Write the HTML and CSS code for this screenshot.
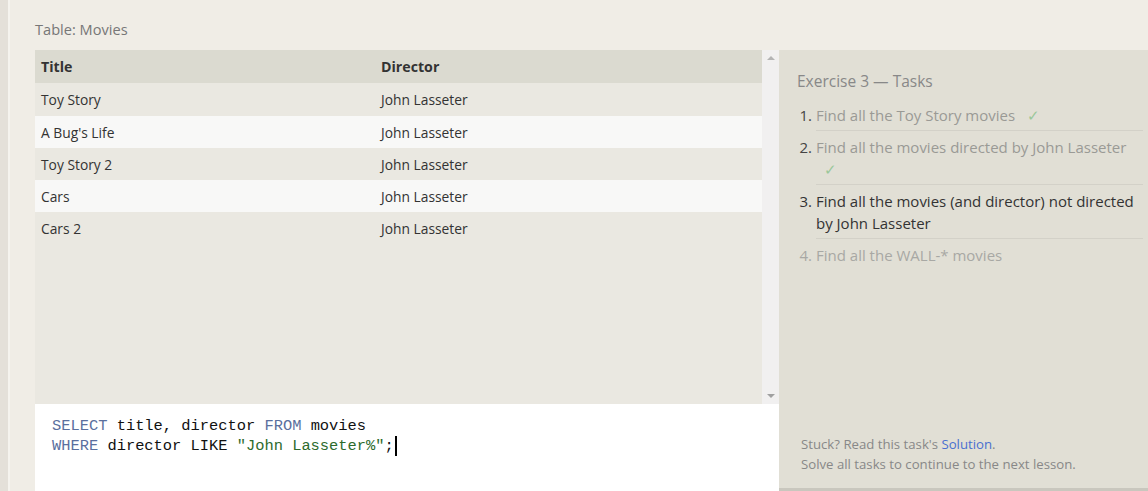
FILE: index.html
```html
<!DOCTYPE html>
<html>
<head>
<meta charset="utf-8">
<link rel="stylesheet" href="styles.css">
</head>
<body>
<div class="page">
  <div class="edge"></div>
  <main class="main">
    <div class="caption">Table: Movies</div>
    <div class="workspace">
      <div class="left">
        <div class="table-area">
          <div class="table-scroll">
            <table class="grid">
              <thead>
                <tr><th class="c1">Title</th><th>Director</th></tr>
              </thead>
              <tbody>
                <tr class="odd first"><td>Toy Story</td><td>John Lasseter</td></tr>
                <tr class="even"><td>A Bug's Life</td><td>John Lasseter</td></tr>
                <tr class="odd"><td>Toy Story 2</td><td>John Lasseter</td></tr>
                <tr class="even"><td>Cars</td><td>John Lasseter</td></tr>
                <tr class="odd"><td>Cars 2</td><td>John Lasseter</td></tr>
              </tbody>
            </table>
          </div>
          <div class="scrollbar">
            <span class="arrow up"></span>
            <span class="arrow down"></span>
          </div>
        </div>
        <div class="editor">
          <div class="code"><span class="kw">SELECT</span> title, director <span class="kw">FROM</span> movies</div>
          <div class="code"><span class="kw">WHERE</span> director LIKE <span class="str">"John Lasseter%"</span>;<span class="cursor"></span></div>
        </div>
      </div>
      <aside class="tasks">
        <h2 class="tasks-title">Exercise 3 — Tasks</h2>
        <ol class="task-list">
          <li class="task done"><span class="num">1.</span><span class="body">Find all the Toy Story movies <span class="check">✓</span></span></li>
          <li class="task done"><span class="num">2.</span><span class="body">Find all the movies directed by John Lasseter <span class="check">✓</span></span></li>
          <li class="task active"><span class="num">3.</span><span class="body">Find all the movies (and director) not directed by John Lasseter</span></li>
          <li class="task pending"><span class="num">4.</span><span class="body noline">Find all the WALL-* movies</span></li>
        </ol>
        <div class="tasks-foot">
          <div>Stuck? Read this task's <a class="link">Solution</a>.</div>
          <div>Solve all tasks to continue to the next lesson.</div>
        </div>
      </aside>
    </div>
  </main>
</div>
</body>
</html>
```

FILE: styles.css
```css
html, body {
  margin: 0;
  padding: 0;
  height: 100%;
  overflow: hidden;
}
body {
  background: #f0ede6;
  font-family: "Open Sans", "Noto Sans", sans-serif;
  color: #333;
}
.page {
  display: flex;
  height: 100%;
}
.edge {
  width: 8px;
  flex: none;
  background: #e4e0d9;
  border-right: 2px solid #f5f3ee;
}
.main {
  flex: 1;
  padding-left: 25px;
  display: flex;
  flex-direction: column;
}
.caption {
  flex: none;
  height: 50px;
  box-sizing: border-box;
  padding-top: 20px;
  font-size: 14.6px;
  color: #777;
  line-height: 18px;
}
.workspace {
  flex: none;
  display: flex;
  align-items: flex-start;
}
.left {
  width: 744px;
  flex: none;
  display: flex;
  flex-direction: column;
}
.table-area {
  flex: none;
  height: 354px;
  display: flex;
  background: #eae8e1;
}
.table-scroll {
  flex: 1;
}
.grid {
  width: 100%;
  border-collapse: collapse;
  font-size: 13.8px;
}
.grid th {
  background: #dbdad0;
  text-align: left;
  font-weight: bold;
  font-size: 14.2px;
  height: 33px;
  padding: 0 6px;
  color: #333;
}
.grid th.c1 {
  width: 328px;
}
.grid td {
  height: 32px;
  padding: 0 6px;
  color: #333;
}
.grid tr.first td {
  height: 33px;
}
.grid tr.odd td {
  background: #eae8e1;
}
.grid tr.even td {
  background: #f8f8f7;
}
.scrollbar {
  width: 17px;
  flex: none;
  background: #f1f0f0;
  display: flex;
  flex-direction: column;
  justify-content: space-between;
  align-items: center;
  padding: 6px 0 6px;
  box-sizing: border-box;
}
.arrow {
  width: 0;
  height: 0;
  border-left: 4px solid transparent;
  border-right: 4px solid transparent;
}
.arrow.up {
  border-bottom: 4px solid #b4b4b4;
}
.arrow.down {
  border-top: 4px solid #a0a0a0;
}
.editor {
  flex: none;
  background: #fff;
  height: 87px;
  box-sizing: border-box;
  padding: 12px 17px 0;
}
.code {
  font-family: "Liberation Mono", "DejaVu Sans Mono", monospace;
  font-size: 15.4px;
  line-height: 20px;
  color: #111;
  white-space: pre;
  display: flex;
  align-items: center;
}
.kw {
  color: #5a6f9e;
}
.str {
  color: #2d6b2d;
}
.cursor {
  display: inline-block;
  width: 2px;
  height: 20px;
  background: #000;
  margin-left: 1px;
}
.tasks {
  width: 369px;
  flex: none;
  height: 441px;
  box-sizing: border-box;
  background: #e1dfd5;
  border-bottom: 3px solid #c9c7be;
  padding: 20px 5px 14px 18px;
  display: flex;
  flex-direction: column;
}
.tasks-title {
  margin: 0 0 7px;
  font-weight: normal;
  font-size: 15.5px;
  line-height: 22px;
  color: #888;
}
.task-list {
  list-style: none;
  margin: 0;
  padding: 0;
  font-size: 15px;
  line-height: 22px;
}
.task {
  display: flex;
}
.num {
  width: 15px;
  flex: none;
  text-align: right;
  margin-right: 4px;
  padding-top: 5px;
}
.body {
  flex: 1;
  padding: 5px 0 4px;
  border-bottom: 1px solid #d3d1c8;
}
.body.noline {
  border-bottom: none;
}
.task.done .num {
  color: #444;
}
.task.done .body {
  color: #9a9a95;
}
.task.active .num,
.task.active .body {
  color: #333;
}
.task.pending .num,
.task.pending .body {
  color: #a8a8a4;
}
.check {
  color: #9ac79a;
  margin-left: 8px;
}
.tasks-foot {
  margin-top: auto;
  padding-left: 4px;
  font-size: 13.2px;
  line-height: 20px;
  color: #888;
}
.link {
  color: #4a6fd0;
}
```
